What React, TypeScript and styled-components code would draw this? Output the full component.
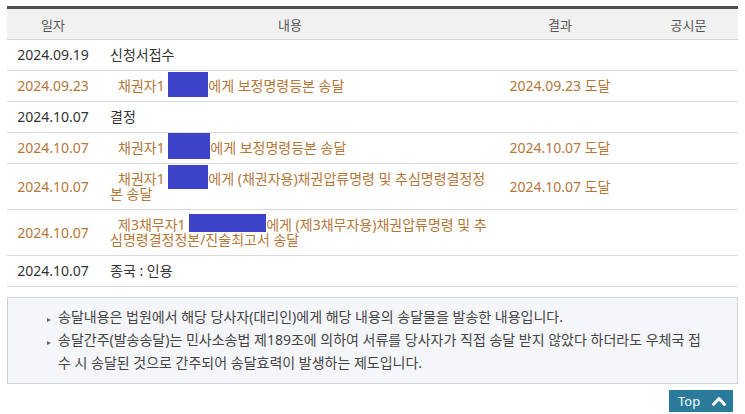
import React from "react";
import styled, { createGlobalStyle } from "styled-components";

const GlobalStyle = createGlobalStyle`
  html, body { margin: 0; padding: 0; background: #fff; }
  body { font-family: "Noto Sans", "Noto Sans CJK KR", sans-serif; }
`;

const Page = styled.div`
  padding: 6px 7px 0 7px;
  width: 731px;
  display: flex;
  flex-direction: column;
`;

const Table = styled.table`
  width: 731px;
  border-collapse: collapse;
  table-layout: fixed;
  border-top: 3px solid #505050;
  font-size: 14px;
`;

const HeadCell = styled.th`
  height: 30px;
  padding: 0;
  background: #f1f1f1;
  border-bottom: 1px solid #d4d4d4;
  color: #555;
  font-weight: 400;
  font-size: 13px;
  text-align: center;
  vertical-align: middle;
`;

const Row = styled.tr<{ $tone: "plain" | "sent" }>`
  color: ${(p) => (p.$tone === "sent" ? "#b5773a" : "#333")};
  border-bottom: 1px solid #dcdcdc;
`;

const Cell = styled.td<{ $align?: "left" | "center"; $indent?: boolean }>`
  padding: 7px 0 8px 0;
  line-height: 15px;
  font-weight: 400;
  white-space: nowrap;
  text-align: ${(p) => p.$align ?? "center"};
  vertical-align: middle;
  padding-left: ${(p) => (p.$align === "left" ? "11px" : "0")};
  text-indent: ${(p) => (p.$indent ? "8px" : "0")};
`;

/* redaction overlay laid over the name in the text */
const Redact = styled.span<{ $w: number; $h: number }>`
  display: inline-block;
  position: relative;
  top: -3px;
  width: ${(p) => p.$w}px;
  height: ${(p) => p.$h}px;
  background: #3c43c9;
  vertical-align: middle;
  margin: ${(p) => -p.$h / 2}px 0;
  text-indent: 0;
`;

const Notice = styled.div`
  margin-top: 10px;
  border: 1px solid #cfd1d6;
  background: #f5f6fa;
  padding: 7px 0 9px 0;
`;

const NoticeList = styled.ul`
  list-style: none;
  margin: 0;
  padding: 0 0 0 50px;
  font-size: 14px;
  line-height: 23px;
  color: #444;
  white-space: nowrap;
`;

const NoticeItem = styled.li`
  position: relative;
  &::before {
    content: "";
    position: absolute;
    left: -11px;
    top: 13px;
    border-left: 4px solid #666;
    border-top: 2.5px solid transparent;
    border-bottom: 2.5px solid transparent;
  }
`;

const Footer = styled.div`
  display: flex;
  justify-content: flex-end;
  padding: 6px 5px 0 0;
`;

const TopButton = styled.button`
  display: flex;
  align-items: center;
  gap: 12px;
  width: 64px;
  height: 22px;
  padding: 0 0 0 9px;
  border: none;
  background: #2a7b9b;
  color: #fff;
  font-family: "Noto Sans", sans-serif;
  font-size: 13px;
  cursor: pointer;
`;

type Entry = {
  date: string;
  tone: "plain" | "sent";
  content: React.ReactNode;
  result?: string;
};

const entries: Entry[] = [
  { date: "2024.09.19", tone: "plain", content: "신청서접수" },
  {
    date: "2024.09.23",
    tone: "sent",
    content: (
      <>
        채권자1 <Redact $w={40} $h={25} />에게 보정명령등본 송달
      </>
    ),
    result: "2024.09.23 도달",
  },
  { date: "2024.10.07", tone: "plain", content: "결정" },
  {
    date: "2024.10.07",
    tone: "sent",
    content: (
      <>
        채권자1 <Redact $w={42} $h={26} />에게 보정명령등본 송달
      </>
    ),
    result: "2024.10.07 도달",
  },
  {
    date: "2024.10.07",
    tone: "sent",
    content: (
      <>
        채권자1 <Redact $w={40} $h={24} />에게 (채권자용)채권압류명령 및 추심명령결정정
        <br />본 송달
      </>
    ),
    result: "2024.10.07 도달",
  },
  {
    date: "2024.10.07",
    tone: "sent",
    content: (
      <>
        제3채무자1 <Redact $w={77} $h={18} />에게 (제3채무자용)채권압류명령 및 추
        <br />심명령결정정본/진술최고서 송달
      </>
    ),
  },
  { date: "2024.10.07", tone: "plain", content: "종국 : 인용" },
];

export default function App() {
  return (
    <>
      <GlobalStyle />
      <Page>
        <Table>
          <colgroup>
            <col style={{ width: 92 }} />
            <col style={{ width: 382 }} />
            <col style={{ width: 158 }} />
            <col style={{ width: 99 }} />
          </colgroup>
          <thead>
            <tr>
              <HeadCell>일자</HeadCell>
              <HeadCell>내용</HeadCell>
              <HeadCell>결과</HeadCell>
              <HeadCell>공시문</HeadCell>
            </tr>
          </thead>
          <tbody>
            {entries.map((e, i) => (
              <Row key={i} $tone={e.tone}>
                <Cell>{e.date}</Cell>
                <Cell $align="left" $indent={e.tone === "sent"}>
                  {e.content}
                </Cell>
                <Cell>{e.result ?? ""}</Cell>
                <Cell />
              </Row>
            ))}
          </tbody>
        </Table>
        <Notice>
          <NoticeList>
            <NoticeItem>
              송달내용은 법원에서 해당 당사자(대리인)에게 해당 내용의 송달물을 발송한 내용입니다.
            </NoticeItem>
            <NoticeItem>
              송달간주(발송송달)는 민사소송법 제189조에 의하여 서류를 당사자가 직접 송달 받지 않았다 하더라도 우체국 접
              <br />수 시 송달된 것으로 간주되어 송달효력이 발생하는 제도입니다.
            </NoticeItem>
          </NoticeList>
        </Notice>
        <Footer>
          <TopButton type="button">
            Top
            <svg width="14" height="10" viewBox="0 0 14 10" aria-hidden="true">
              <polyline
                points="1.5,8.5 7,2.5 12.5,8.5"
                fill="none"
                stroke="#fff"
                strokeWidth="3"
                strokeLinecap="round"
                strokeLinejoin="round"
              />
            </svg>
          </TopButton>
        </Footer>
      </Page>
    </>
  );
}
